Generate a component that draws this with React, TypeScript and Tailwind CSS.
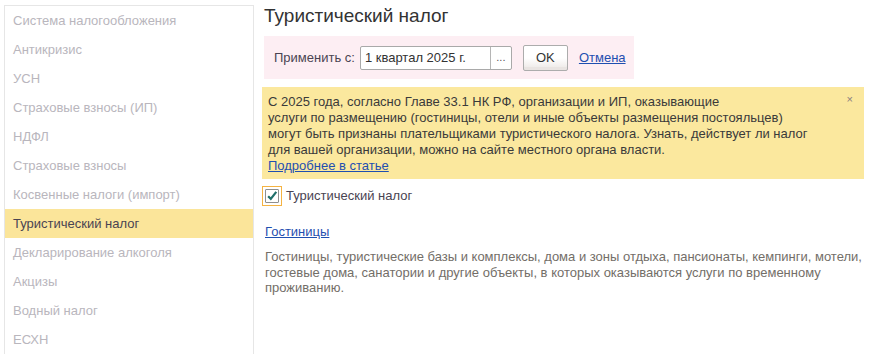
import React from "react";

const items = [
  "Система налогообложения",
  "Антикризис",
  "УСН",
  "Страховые взносы (ИП)",
  "НДФЛ",
  "Страховые взносы",
  "Косвенные налоги (импорт)",
  "Туристический налог",
  "Декларирование алкоголя",
  "Акцизы",
  "Водный налог",
  "ЕСХН",
];

export default function App() {
  return (
    <div
      className="flex w-[893px] h-[354px] overflow-hidden bg-white text-[13px] text-[#333]"
      style={{ fontFamily: '"Liberation Sans", Arial, sans-serif' }}
    >
      <div className="ml-[4px] mt-[5px] w-[250px] shrink-0 border border-b-0 border-[#e6e6e6]">
        {items.map((t) => {
          const sel = t === "Туристический налог";
          return (
            <div
              key={t}
              className={
                sel
                  ? "h-[29px] flex items-center pl-[8px] bg-[#fbe59a] text-[#4a4452]"
                  : "h-[29px] flex items-center pl-[8px] text-[#b9b6bd]"
              }
            >
              {t}
            </div>
          );
        })}
      </div>

      <div className="ml-[8px] flex flex-col w-[620px]">
        <div className="mt-[4px] h-[24px] leading-[24px] text-[19px] text-[#333] pl-[2px]">
          Туристический налог
        </div>

        <div className="mt-[8px] ml-[2px] w-[370px] h-[43px] bg-[#fdeef3] flex items-center pl-[10px]">
          <span className="text-[#4a4452]">Применить с:</span>
          <div className="ml-[5px] flex h-[24px] w-[152px] border border-[#a9a9a9] rounded-[2px] bg-white">
            <div className="flex-1 flex items-center pl-[4px] text-[#333]">1 квартал 2025 г.</div>
            <div className="w-[21px] border-l border-[#b5b5b5] flex items-center justify-center text-[#555] text-[11px]">
              ...
            </div>
          </div>
          <button className="ml-[11px] h-[26px] w-[45px] border border-[#acacac] rounded-[2px] bg-gradient-to-b from-white via-white to-[#ebe6e4] text-[#333] shadow-[inset_0_-3px_0_#e9e4e2]">
            OK
          </button>
          <a className="ml-[11px] text-[#1f4fb0] underline">Отмена</a>
        </div>

        <div className="mt-[8px] relative w-[602px] h-[92px] bg-[#fbe89e] pl-[6px] pt-[7px] leading-[16px] text-[#3a3a3a]">
          С 2025 года, согласно Главе 33.1 НК РФ, организации и ИП, оказывающие
          <br />
          услуги по размещению (гостиницы, отели и иные объекты размещения постояльцев)
          <br />
          могут быть признаны плательщиками туристического налога. Узнать, действует ли налог
          <br />
          для вашей организации, можно на сайте местного органа власти.
          <br />
          <a className="text-[#1f4fb0] underline">Подробнее в статье</a>
          <span className="absolute right-[11px] top-[4px] text-[11px] text-[#8a8080]">×</span>
        </div>

        <div className="mt-[7px] flex items-center h-[20px]">
          <div className="w-[20px] h-[20px] border border-[#f5b342] flex items-center justify-center">
            <div className="w-[14px] h-[14px] border border-[#8f8f8f] rounded-[1px] bg-white flex items-center justify-center">
              <svg width="14" height="14" viewBox="0 0 14 14">
                <path d="M2.5 7.2 L5.6 10.3 L12 2.2" fill="none" stroke="#1f6f6a" strokeWidth="2.6" />
              </svg>
            </div>
          </div>
          <span className="ml-[4px] text-[#4a4452]">Туристический налог</span>
        </div>

        <a className="mt-[18px] ml-[3px] leading-[16px] text-[#1f4fb0] underline w-fit">Гостиницы</a>

        <div className="mt-[9px] ml-[3px] leading-[15.5px] text-[13px] text-[#736e68] whitespace-nowrap">
          Гостиницы, туристические базы и комплексы, дома и зоны отдыха, пансионаты, кемпинги, мотели,
          <br />
          гостевые дома, санатории и другие объекты, в которых оказываются услуги по временному
          <br />
          проживанию.
        </div>
      </div>
    </div>
  );
}
